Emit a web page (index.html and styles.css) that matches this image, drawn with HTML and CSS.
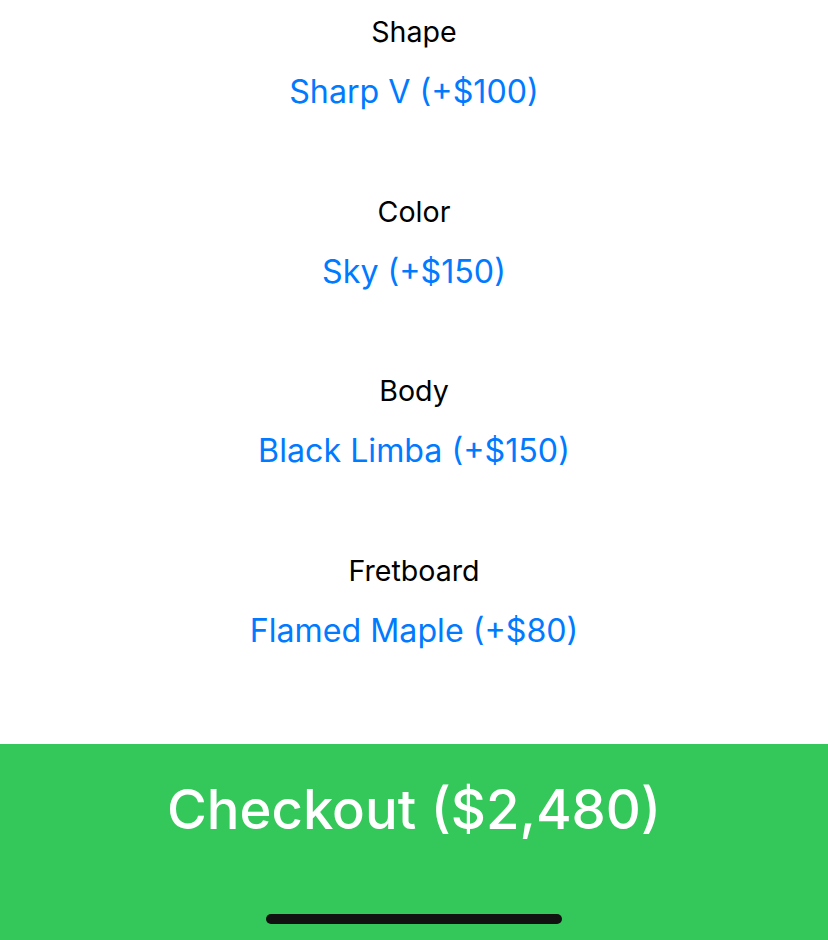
FILE: index.html
```html
<!DOCTYPE html>
<html lang="en">
<head>
<meta charset="utf-8">
<title>Guitar Builder</title>
<link rel="stylesheet" href="styles.css">
</head>
<body>
<div class="screen">
  <div class="options">
    <div class="option">
      <div class="option-label">Shape</div>
      <div class="option-value">Sharp V (+$100)</div>
    </div>
    <div class="option">
      <div class="option-label">Color</div>
      <div class="option-value">Sky (+$150)</div>
    </div>
    <div class="option">
      <div class="option-label">Body</div>
      <div class="option-value">Black Limba (+$150)</div>
    </div>
    <div class="option">
      <div class="option-label">Fretboard</div>
      <div class="option-value">Flamed Maple (+$80)</div>
    </div>
  </div>
  <div class="checkout">
    <div class="checkout-text">Checkout ($2,480)</div>
    <div class="home-indicator"></div>
  </div>
</div>
</body>
</html>
```
FILE: styles.css
```css
html, body {
  margin: 0;
  padding: 0;
  background: #ffffff;
}
body {
  font-family: Inter, "Noto Sans", "Liberation Sans", sans-serif;
}
.screen {
  height: 940px;
  display: flex;
  flex-direction: column;
  overflow: hidden;
}
.options {
  display: flex;
  flex-direction: column;
  padding-top: 16px;
}
.option {
  display: flex;
  flex-direction: column;
  align-items: center;
  gap: 24px;
  height: 179.5px;
}
.option-label {
  font-size: 28.6px;
  line-height: 32px;
  color: #000000;
}
.option-value {
  font-size: 32.2px;
  line-height: 40px;
  color: #007aff;
}
.checkout {
  margin-top: auto;
  height: 196px;
  background: #34c759;
  display: flex;
  flex-direction: column;
  align-items: center;
  box-sizing: border-box;
  padding-top: 33px;
}
.checkout-text {
  font-size: 54.4px;
  font-weight: 500;
  line-height: 64px;
  color: #ffffff;
}
.home-indicator {
  margin-top: 73px;
  width: 296px;
  height: 10px;
  border-radius: 5px;
  background: #111111;
}
```
